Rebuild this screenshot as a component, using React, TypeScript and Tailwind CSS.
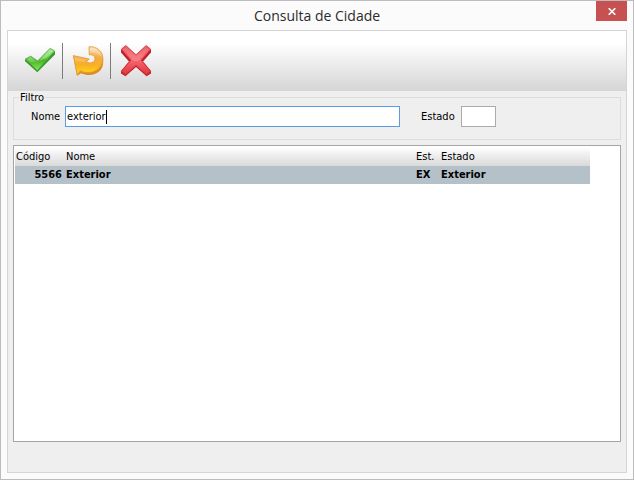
import type { ReactNode } from 'react';

const cities = [{ code: 5566, name: 'Exterior', uf: 'EX', state: 'Exterior' }];

function CheckIcon() {
  return (
    <svg viewBox="0 0 47 36" className="block h-9 w-full" aria-hidden="true">
      <defs>
        <linearGradient id="check" x1="0" y1="0" x2="0" y2="1">
          <stop offset="0" stopColor="#9be88a" />
          <stop offset=".4" stopColor="#6fd052" />
          <stop offset=".55" stopColor="#48b424" />
          <stop offset="1" stopColor="#8bea5c" />
        </linearGradient>
      </defs>
      <path d="M10 16v2.3L22.3 29.3 40 11.5V8L22.5 24z" fill="#3a9a2c" />
      <path
        d="M10.4 16 15.8 13.2 22.6 18 35 5.4 39.7 8 22.3 27.6z"
        fill="url(#check)"
        stroke="#46a838"
        strokeWidth=".8"
        strokeLinejoin="round"
      />
      <path d="M11.8 16.3 15.7 14.3 22.6 19.2 35.2 6.5 38 8C32 15 25 20 14.5 18.8z" fill="#fff" opacity=".25" />
    </svg>
  );
}

function UndoIcon() {
  return (
    <svg viewBox="0 0 47 36" className="block h-9 w-full" aria-hidden="true">
      <defs>
        <linearGradient id="undo" x1="0" y1="0" x2="0" y2="1">
          <stop offset="0" stopColor="#fbdcae" />
          <stop offset=".4" stopColor="#f4ab45" />
          <stop offset=".65" stopColor="#f9b022" />
          <stop offset="1" stopColor="#ffd61c" />
        </linearGradient>
      </defs>
      <path
        d="M10.3 13 14 33 18 30.2C25 33.4 33 32.2 37.5 27.2 40.5 23.6 40.4 19 40 15L34 24 20 26z"
        fill="#dc8c24"
      />
      <path
        d="M26 3.7C34 3.2 39.9 8.4 39.9 15.4 39.9 23.6 33.5 29.4 25 29.6 21.8 29.6 19.3 28.8 17.5 27.8L14.2 31.6 10.3 12.6 26.2 16 23.4 18.8C26.5 21.2 32 19.6 32 15.8 32 12.8 29.6 11.4 26.2 11.8z"
        fill="url(#undo)"
        stroke="#e29a36"
        strokeWidth=".8"
        strokeLinejoin="round"
      />
      <path d="M27 4.8C33.5 4.6 38.3 8.6 38.9 14 36.5 11 32 8.8 27 9.2z" fill="#fff" opacity=".3" />
      <path d="M11.5 14 23.5 16.6 21.5 18.8 12.3 18.2z" fill="#fff" opacity=".2" />
    </svg>
  );
}

function CancelIcon() {
  return (
    <svg viewBox="0 0 47 36" className="block h-9 w-full" aria-hidden="true">
      <defs>
        <linearGradient id="cancel" x1="0" y1="0" x2="0" y2="1">
          <stop offset="0" stopColor="#e85058" />
          <stop offset=".5" stopColor="#f4696e" />
          <stop offset="1" stopColor="#e3323b" />
        </linearGradient>
      </defs>
      <path
        d="M10 6.5v3L18 18.5 10 28v2.5L14.5 33.3 25 24 35.5 33.3 40 30.5V28L32 18.5 40 9.5v-3L25 17z"
        fill="#bf1f2a"
      />
      <path
        d="M14.8 2.5 25 11.8 35.2 2.5 39.7 6.2 30.2 17.2 39.7 28.4 35.2 31.6 25 22.4 14.8 31.6 10.3 28.4 19.8 17.2 10.3 6.2z"
        fill="url(#cancel)"
        stroke="#cf333d"
        strokeWidth=".8"
        strokeLinejoin="round"
      />
      <path d="M14.8 3.8 25 13.1 35.2 3.8 38 6.4 28.5 17 25 18.5 21.5 17 12 6.4z" fill="#fff" opacity=".15" />
    </svg>
  );
}

function ToolButton({ label, last, children }: { label: string; last?: boolean; children: ReactNode }) {
  return (
    <button
      type="button"
      aria-label={label}
      className={last ? 'w-12 border-r border-transparent' : 'w-12 border-r border-[#7c7c7c]'}
    >
      {children}
    </button>
  );
}

export default function App() {
  return (
    <div className="flex min-h-screen flex-col border border-[#bdbbbd] bg-[#fbfbfb] px-1.5 pb-1.5 font-['DejaVu_Sans_Condensed','Liberation_Sans',sans-serif] text-[11px] leading-4 text-black">
      {/* Title bar */}
      <header className="flex h-[29px] items-start">
        <span className="w-[31px]" />
        <h1 className="flex-1 text-center font-['Open_Sans','Noto_Sans',sans-serif] text-sm leading-[29px] text-[#2b2b2b]">
          Consulta de Cidade
        </h1>
        <button
          type="button"
          aria-label="Fechar"
          className="flex h-5 w-[31px] items-center justify-center bg-[#c75050]"
        >
          <svg viewBox="0 0 8 7" className="h-[7px] w-2" aria-hidden="true">
            <path d="M.7.2 7.3 6.8M7.3.2.7 6.8" stroke="#fff" strokeWidth="1.6" />
          </svg>
        </button>
      </header>

      <main className="flex flex-1 flex-col border border-[#d6d4d6] bg-[#efefef]">
        {/* Toolbar */}
        <div className="flex bg-linear-to-b from-white from-20% to-[#d5d5d5] px-[7px] py-3">
          <ToolButton label="Confirmar">
            <CheckIcon />
          </ToolButton>
          <ToolButton label="Desfazer">
            <UndoIcon />
          </ToolButton>
          <ToolButton label="Cancelar" last>
            <CancelIcon />
          </ToolButton>
        </div>

        <div className="flex flex-1 flex-col px-[5px] pb-[30px]">
          {/* Filter */}
          <fieldset className="flex items-center border border-[#dcdcdc] pt-0.5 pr-2 pb-3 pl-[17px]">
            <legend className="-ml-3 px-px leading-[13px]">Filtro</legend>
            <label htmlFor="nome" className="w-[34px]">
              Nome
            </label>
            <div className="relative w-[335px] max-w-full">
              <input
                id="nome"
                type="text"
                defaultValue="exterior"
                className="block h-[21px] w-full border border-[#569de5] bg-white px-px caret-transparent outline-none"
              />
              {/* Text cursor */}
              <span className="pointer-events-none absolute top-1 left-0.5 h-3.5 border-r border-black">
                <span className="invisible" aria-hidden="true">
                  exterior
                </span>
              </span>
            </div>
            <label htmlFor="estado" className="ml-[21px] w-10">
              Estado
            </label>
            <input
              id="estado"
              type="text"
              className="h-[21px] w-[35px] border border-[#ababab] bg-white px-px outline-none"
            />
          </fieldset>

          {/* Results */}
          <div className="mt-[5px] flex-1 border border-[#a5a5a5] bg-white pt-px pr-[30px] pl-px">
            <table className="w-full table-fixed border-collapse text-left">
              <thead>
                <tr className="h-[19px] bg-linear-to-b from-white to-[#d9d9d9]">
                  <th className="w-[50px] px-px font-normal">Código</th>
                  <th className="px-px font-normal">Nome</th>
                  <th className="w-[25px] px-px font-normal">Est.</th>
                  <th className="w-[150px] px-px font-normal">Estado</th>
                </tr>
              </thead>
              <tbody>
                {cities.map((city) => (
                  <tr key={city.code} className="h-[18px] bg-[#b5c1c9] font-bold">
                    <td className="pr-[3px] text-right">{city.code}</td>
                    <td className="px-px">{city.name}</td>
                    <td className="px-px">{city.uf}</td>
                    <td className="px-px">{city.state}</td>
                  </tr>
                ))}
              </tbody>
            </table>
          </div>
        </div>
      </main>
    </div>
  );
}
